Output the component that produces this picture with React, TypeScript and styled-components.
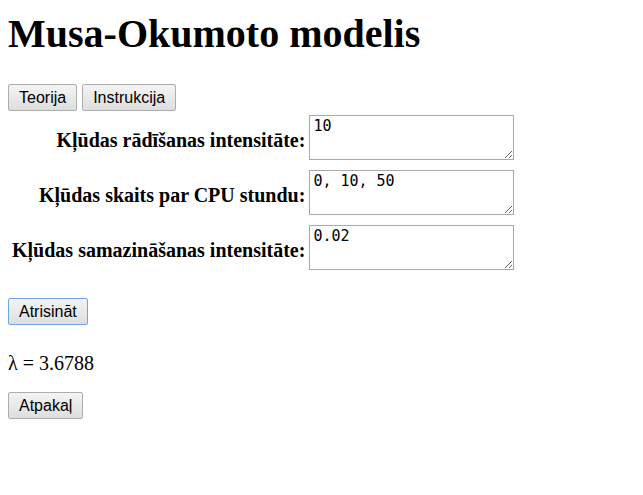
import React from "react";
import styled, { createGlobalStyle } from "styled-components";

const Global = createGlobalStyle`
  html, body { margin: 0; padding: 0; background: #ffffff; }
  body { font-family: "Liberation Serif", "Times New Roman", serif; font-size: 20px; color: #000; }
`;

const Page = styled.div`
  padding: 11px 8px 40px 8px;
`;

const Title = styled.h1`
  margin: 0;
  font-size: 40px;
  line-height: 46px;
  font-weight: bold;
`;

const Toolbar = styled.div`
  display: flex;
  gap: 5px;
  margin-top: 27px;
`;

const Button = styled.button<{ $focused?: boolean }>`
  box-sizing: border-box;
  height: 27px;
  padding: 0 10px;
  font-family: "Liberation Sans", Arial, sans-serif;
  font-size: 16px;
  color: #000;
  background: linear-gradient(#f4f4f4, #dedede);
  border: 1px solid ${(p) => (p.$focused ? "#6fa4e6" : "#adadad")};
  border-radius: 2px;
  cursor: pointer;
`;

const Form = styled.div`
  display: grid;
  grid-template-columns: auto auto;
  justify-content: start;
  column-gap: 4px;
  row-gap: 5px;
  margin: 4px 0 0 4px;
`;

const Label = styled.label`
  align-self: center;
  text-align: right;
  font-weight: bold;
  font-size: 20px;
  line-height: 23px;
`;

const Field = styled.div`
  height: 50px;
`;

const Input = styled.textarea`
  box-sizing: border-box;
  display: block;
  width: 205px;
  height: 45px;
  margin: 0;
  padding: 2px 3px;
  border: 1px solid #a9a9a9;
  font-family: "DejaVu Sans Mono", monospace;
  font-size: 15px;
  line-height: 17px;
  color: #000;
  background: #fff;
`;

const Actions = styled.div`
  margin-top: 23px;
`;

const Result = styled.p`
  margin: 27px 0 0;
  font-size: 20px;
  line-height: 23px;
`;

const Footer = styled.div`
  margin-top: 17px;
`;

const fields = [
  { id: "a", label: "Kļūdas rādīšanas intensitāte:", value: "10" },
  { id: "b", label: "Kļūdas skaits par CPU stundu:", value: "0, 10, 50" },
  { id: "c", label: "Kļūdas samazināšanas intensitāte:", value: "0.02" },
];

export default function App() {
  return (
    <Page>
      <Global />
      <Title>Musa-Okumoto modelis</Title>
      <Toolbar>
        <Button>Teorija</Button>
        <Button>Instrukcija</Button>
      </Toolbar>
      <Form>
        {fields.map((f) => (
          <React.Fragment key={f.id}>
            <Label htmlFor={f.id}>{f.label}</Label>
            <Field>
              <Input id={f.id} defaultValue={f.value} />
            </Field>
          </React.Fragment>
        ))}
      </Form>
      <Actions>
        <Button $focused>Atrisināt</Button>
      </Actions>
      <Result>λ = 3.6788</Result>
      <Footer>
        <Button>Atpakaļ</Button>
      </Footer>
    </Page>
  );
}
